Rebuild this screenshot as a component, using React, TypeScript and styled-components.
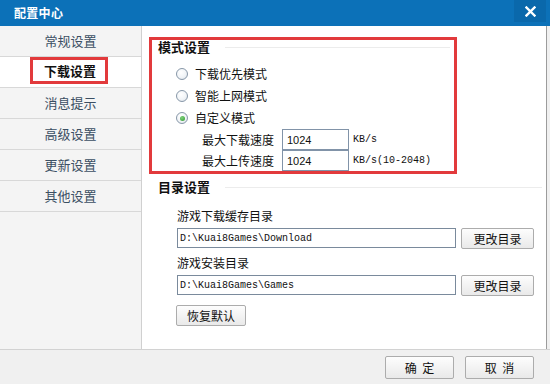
import React from 'react';
import styled, { createGlobalStyle } from 'styled-components';

const GlobalStyle = createGlobalStyle`
  html, body {
    margin: 0;
    padding: 0;
    background: #ffffff;
  }
  body {
    font-family: "Noto Sans CJK SC", "Noto Sans", sans-serif;
    font-size: 12px;
    color: #1a1a1a;
  }
`;

const navItems = ['常规设置', '下载设置', '消息提示', '高级设置', '更新设置', '其他设置'];

const modes = [
    { label: '下载优先模式', checked: false },
    { label: '智能上网模式', checked: false },
    { label: '自定义模式', checked: true },
];

const speeds = [
    { label: '最大下载速度', value: '1024', unit: 'KB/s' },
    { label: '最大上传速度', value: '1024', unit: 'KB/s(10-2048)' },
];

const dirs = [
    { label: '游戏下载缓存目录', path: 'D:\\Kuai8Games\\Download' },
    { label: '游戏安装目录', path: 'D:\\Kuai8Games\\Games' },
];

const App: React.FC = () => {
    return (
        <>
            <GlobalStyle />
            <Window>
                <TitleBar>
                    <Title>配置中心</Title>
                    <CloseButton>
                        <svg width="11" height="11" viewBox="0 0 11 11">
                            <path d="M1.5 1.5 L9.5 9.5 M9.5 1.5 L1.5 9.5" stroke="#ffffff" strokeWidth="2.4" strokeLinecap="square" />
                        </svg>
                    </CloseButton>
                </TitleBar>

                <Body>
                    <Sidebar>
                        {navItems.map(item => (
                            <NavItem key={item} $active={item === '下载设置'}>
                                {item === '下载设置' ? <Highlight>{item}</Highlight> : item}
                            </NavItem>
                        ))}
                    </Sidebar>

                    <Content>
                        <ModeGroup>
                            <GroupHeader>
                                <GroupTitle>模式设置</GroupTitle>
                                <GroupLine />
                            </GroupHeader>
                            <RadioList>
                                {modes.map(m => (
                                    <RadioRow key={m.label}>
                                        <RadioCircle $checked={m.checked} />
                                        <RadioLabel>{m.label}</RadioLabel>
                                    </RadioRow>
                                ))}
                            </RadioList>
                            {speeds.map(s => (
                                <SpeedRow key={s.label}>
                                    <SpeedLabel>{s.label}</SpeedLabel>
                                    <SpeedInput>{s.value}</SpeedInput>
                                    <Unit>{s.unit}</Unit>
                                </SpeedRow>
                            ))}
                        </ModeGroup>

                        <DirSection>
                            <GroupHeader>
                                <GroupTitle>目录设置</GroupTitle>
                                <GroupLine />
                            </GroupHeader>
                            {dirs.map((d, i) => (
                                <DirBlock key={d.label} $first={i === 0}>
                                    <DirLabel>{d.label}</DirLabel>
                                    <DirRow>
                                        <PathInput>{d.path}</PathInput>
                                        <Button $width={73}>更改目录</Button>
                                    </DirRow>
                                </DirBlock>
                            ))}
                            <ResetRow>
                                <Button $width={70}>恢复默认</Button>
                            </ResetRow>
                        </DirSection>
                    </Content>
                </Body>

                <Footer>
                    <Button $width={69} $height={23}>确&nbsp;&nbsp;定</Button>
                    <Button $width={69} $height={23}>取&nbsp;&nbsp;消</Button>
                </Footer>
            </Window>
        </>
    );
};

const Window = styled.div`
  width: 550px;
  height: 384px;
  display: flex;
  flex-direction: column;
  background: #f0f0f0;
  overflow: hidden;
`;

const TitleBar = styled.div`
  height: 26px;
  flex: none;
  display: flex;
  align-items: center;
  background: #0c71b8;
  padding-left: 14px;
  box-sizing: border-box;
`;

const Title = styled.div`
  flex: 1;
  color: #ffffff;
  font-size: 12px;
  font-weight: 700;
  line-height: 14px;
  letter-spacing: 0.3px;
`;

const CloseButton = styled.div`
  align-self: flex-start;
  width: 32px;
  height: 22px;
  margin-right: 4px;
  display: flex;
  align-items: center;
  justify-content: center;
  background: #0a68ab;
`;

const Body = styled.div`
  height: 323px;
  flex: none;
  display: flex;
  border-bottom: 1px solid #d2d2d2;
`;

const Sidebar = styled.div`
  width: 141px;
  flex: none;
  background: #f4f4f4;
  border-right: 1px solid #d0d0d0;
`;

const NavItem = styled.div<{ $active?: boolean }>`
  height: 30px;
  border-bottom: 1px solid #d8d8d8;
  display: flex;
  align-items: ${p => (p.$active ? 'flex-start' : 'center')};
  justify-content: center;
  background: ${p => (p.$active ? '#ffffff' : 'transparent')};
  color: #3b4f63;
  font-size: 13px;
  line-height: 16px;
`;

const Highlight = styled.span`
  box-sizing: border-box;
  height: 27px;
  padding: 0 9px 0 11px;
  margin-right: 3px;
  border: 3px solid #e23a3c;
  display: flex;
  align-items: center;
  color: #111111;
  font-weight: 700;
`;

const Content = styled.div`
  flex: 1;
  margin-right: 3px;
  background: #ffffff;
  border-right: 1px solid #9c9c9c;
  padding: 11px 0 0 7px;
  box-sizing: border-box;
`;

const ModeGroup = styled.div`
  width: 308px;
  height: 137px;
  box-sizing: border-box;
  border: 3px solid #e23a3c;
  padding-left: 6px;
  display: flex;
  flex-direction: column;
`;

const GroupHeader = styled.div`
  height: 14px;
  display: flex;
  align-items: center;
`;

const GroupTitle = styled.div`
  font-size: 13px;
  font-weight: 700;
  line-height: 14px;
  color: #111111;
`;

const GroupLine = styled.div`
  flex: 1;
  height: 1px;
  margin: 0 4px 0 15px;
  background: #ececec;
`;

const RadioList = styled.div`
  margin-top: 9px;
  padding-left: 18px;
`;

const RadioRow = styled.div`
  height: 22px;
  display: flex;
  align-items: center;
`;

const RadioCircle = styled.span<{ $checked?: boolean }>`
  width: 12px;
  height: 12px;
  box-sizing: border-box;
  border: 1px solid #8797a8;
  border-radius: 50%;
  background: radial-gradient(circle at 40% 35%, #ffffff 0%, #f1f4f7 55%, #d7dee6 100%);
  display: flex;
  align-items: center;
  justify-content: center;

  &::after {
    content: '';
    display: ${p => (p.$checked ? 'block' : 'none')};
    width: 5px;
    height: 5px;
    border-radius: 50%;
    background: radial-gradient(circle at 40% 35%, #7fd07a 0%, #2f9a31 100%);
  }
`;

const RadioLabel = styled.span`
  margin-left: 7px;
  line-height: 14px;
  color: #111111;
`;

const SpeedRow = styled.div`
  height: 21px;
  display: flex;
  align-items: center;
  padding-left: 44px;
`;

const SpeedLabel = styled.span`
  width: 72px;
  text-align: right;
  line-height: 14px;
  color: #111111;
`;

const SpeedInput = styled.div`
  width: 67px;
  height: 21px;
  margin-left: 8px;
  box-sizing: border-box;
  border: 1px solid #8193a8;
  padding-left: 4px;
  display: flex;
  align-items: center;
  font-family: "Liberation Sans", Arial, sans-serif;
  font-size: 11px;
  color: #111111;
`;

const Unit = styled.span`
  margin-left: 4px;
  font-family: "Liberation Mono", monospace;
  font-size: 10px;
  color: #111111;
`;

const DirSection = styled.div`
  margin-top: 6px;
  padding-left: 9px;
`;

const DirBlock = styled.div<{ $first?: boolean }>`
  margin-top: ${p => (p.$first ? '15px' : '7px')};
  padding-left: 19px;
`;

const DirLabel = styled.div`
  line-height: 14px;
  color: #111111;
`;

const DirRow = styled.div`
  margin-top: 5px;
  display: flex;
  align-items: flex-start;
  gap: 5px;
`;

const PathInput = styled.div`
  width: 279px;
  height: 20px;
  box-sizing: border-box;
  border: 1px solid #7a8a9c;
  padding-left: 2px;
  display: flex;
  align-items: center;
  font-family: "Liberation Mono", monospace;
  font-size: 10px;
  color: #111111;
`;

const ResetRow = styled.div`
  margin-top: 9px;
  padding-left: 18px;
`;

const Button = styled.div<{ $width: number; $height?: number }>`
  width: ${p => p.$width}px;
  height: ${p => p.$height ?? 21}px;
  box-sizing: border-box;
  border: 1px solid #acacac;
  border-radius: 2px;
  background: linear-gradient(#fdfdfd, #e9e9e9);
  display: flex;
  align-items: center;
  justify-content: center;
  font-size: 12px;
  line-height: 14px;
  color: #111111;
`;

const Footer = styled.div`
  flex: 1;
  display: flex;
  justify-content: flex-end;
  align-items: flex-start;
  gap: 11px;
  padding: 6px 16px 0 0;
`;

export default App;
